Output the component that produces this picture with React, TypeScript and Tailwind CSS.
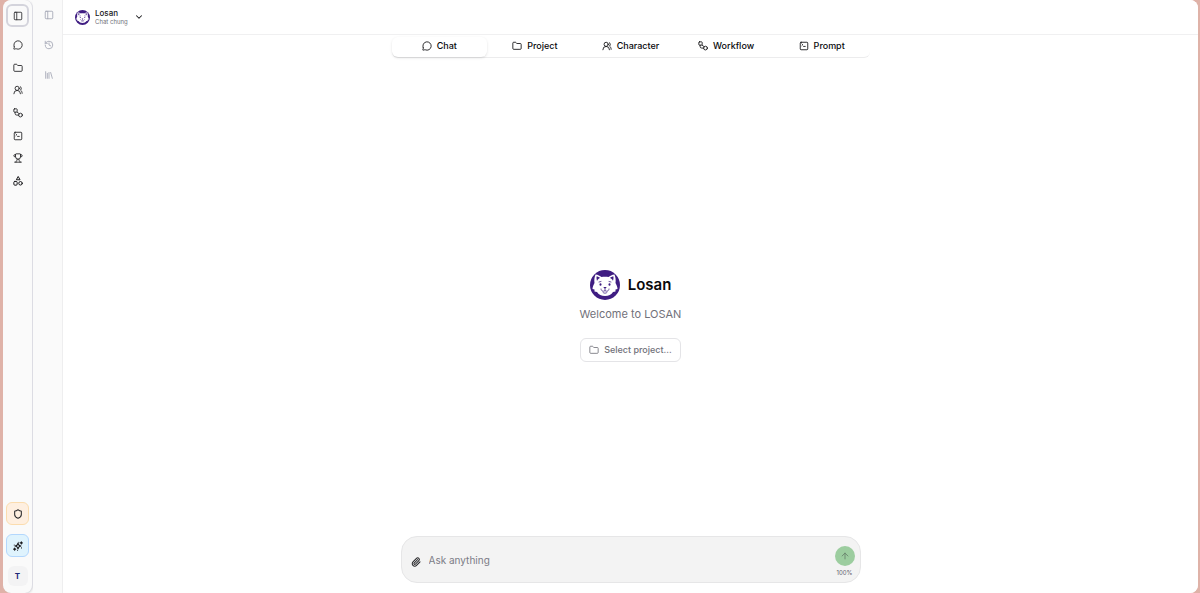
import type { ReactNode } from 'react';
import {
  ArrowUp,
  ChevronDown,
  Folder,
  History,
  Library,
  MessageCircle,
  PanelLeft,
  Paperclip,
  Shield,
  SquareTerminal,
  Trophy,
  UsersRound,
} from 'lucide-react';

type IconProps = { className?: string };

const WorkflowIcon = ({ className }: IconProps) => (
  <svg className={className} viewBox="0 0 24 24" fill="none" stroke="currentColor" strokeWidth="2" strokeLinecap="round" strokeLinejoin="round" aria-hidden="true">
    <rect x="2" y="2" width="8" height="8" rx="1.5" />
    <circle cx="18" cy="17" r="4.5" />
    <path d="M5 10v3a4 4 0 0 0 4 4h4.500" />
    <path d="M10 10l4.500 3.500" />
  </svg>
);

const ShapesIcon = ({ className }: IconProps) => (
  <svg className={className} viewBox="0 0 24 24" fill="none" stroke="currentColor" strokeWidth="2.4" strokeLinecap="round" strokeLinejoin="round" aria-hidden="true">
    <path d="M12 2 8 9h8z" />
    <rect x="2" y="13" width="8" height="9" rx="2.5" />
    <circle cx="18" cy="17.5" r="4.200" />
  </svg>
);

const SparkIcon = ({ className }: IconProps) => (
  <svg className={className} viewBox="0 0 24 24" fill="none" stroke="currentColor" strokeWidth="2.6" strokeLinecap="round" strokeLinejoin="round" aria-hidden="true">
    <path d="M12 5c.8 4.500 2.500 6.200 7 7-4.500.8-6.200 2.500-7 7-.8-4.500-2.500-6.200-7-7 4.500-.8 6.200-2.500 7-7z" />
    <path d="M20 2v5M17.500 4.500h5M4 17v5M1.500 19.500h5" />
    <path d="M14 3h.01M3 9.500h.01M20.500 16.500v.01M11 22h.01" />
  </svg>
);

const CatLogo = ({ className }: IconProps) => (
  <svg className={className} viewBox="0 0 60 60" role="img" aria-label="Losan">
    <circle cx="30" cy="30" r="30" fill="#3f1d82" />
    <path
      d="M11 9c5 0 9 3 12 5 4-1 10-1 14 0 3-2 7-5 12-5 2 5 3 11 2 17 2 4 4 8 4 12l-4 1 0 4-5 1c-3 5-9 8-16 8s-13-3-16-8l-5-1 0-4-4-1c0-4 2-8 4-12-1-6 0-12 2-17z"
      fill="#fff"
    />
    <path d="M13 13c3 0 5 1 7 3-3 1-5 3-6 6-1-3-1-6-1-9zM47 13c-3 0-5 1-7 3 3 1 5 3 6 6 1-3 1-6 1-9z" fill="#3f1d82" />
    <ellipse cx="21" cy="29" rx="2" ry="2.500" fill="#3f1d82" />
    <ellipse cx="39" cy="29" rx="2" ry="2.500" fill="#3f1d82" />
    <path d="M26.500 34h7L30 38z" fill="#3f1d82" />
    <path
      d="M30 38v3M22 38c0 4 5 6 8 3 3 3 8 1 8-3M18 24l4-1M42 24l-4-1M26 45c2 2 6 2 8 0"
      fill="none"
      stroke="#3f1d82"
      strokeWidth="1.500"
      strokeLinecap="round"
    />
  </svg>
);

const navItems: { label: string; icon: ReactNode }[] = [
  { label: 'Chat', icon: <MessageCircle className="size-2.5" /> },
  { label: 'Project', icon: <Folder className="size-2.5" /> },
  { label: 'Character', icon: <UsersRound className="size-2.5" /> },
  { label: 'Workflow', icon: <WorkflowIcon className="size-2.5" /> },
  { label: 'Prompt', icon: <SquareTerminal className="size-2.5" /> },
  { label: 'Ranking', icon: <Trophy className="size-2.5" /> },
  { label: 'Apps', icon: <ShapesIcon className="size-2.5" /> },
];

const Sidebar = () => (
  <aside className="flex w-[30px] shrink-0 flex-col items-center rounded-lg border-r border-[#dcdce3] bg-[#fafafa] pt-1 shadow-sm">
    <button
      aria-label="Toggle sidebar"
      className="flex size-[23px] items-center justify-center rounded-md border-2 border-[#d4d4dc] text-[#27272a]"
    >
      <PanelLeft className="size-2.5" />
    </button>
    <nav className="mt-2 flex h-[156px] flex-col justify-between">
      {navItems.map((item) => (
        <button key={item.label} aria-label={item.label} className="flex size-5 items-center justify-center text-[#18181b]">
          {item.icon}
        </button>
      ))}
    </nav>
    <div className="mt-auto flex flex-col items-center gap-[9px] pb-[7px]">
      <button
        aria-label="Admin"
        className="flex size-[23px] items-center justify-center rounded-md border border-[#fbdcae] bg-[#feefe0] text-[#27272a]"
      >
        <Shield className="size-2.5" strokeWidth={2.5} />
      </button>
      <button
        aria-label="Upgrade"
        className="flex size-[23px] items-center justify-center rounded-md border border-[#b3d7fd] bg-[#dff3fd] text-[#18181b]"
      >
        <SparkIcon className="size-2.5" />
      </button>
      <button className="flex size-5 items-center justify-center rounded-md bg-[#f3f3f4] text-[8px] font-bold text-[#1e2a78]">
        T
      </button>
    </div>
  </aside>
);

const HistoryRail = () => (
  <aside className="flex w-[30px] shrink-0 flex-col items-center gap-2.5 border-r border-[#eeeeef] bg-[#fafafa] pt-[5px] pl-0.5 text-[#a1a5b3]">
    <button aria-label="Open panel" className="flex size-5 items-center justify-center">
      <PanelLeft className="size-2.5" />
    </button>
    <button aria-label="History" className="flex size-5 items-center justify-center">
      <History className="size-2.5" />
    </button>
    <button aria-label="Library" className="flex size-5 items-center justify-center">
      <Library className="size-2.5" />
    </button>
  </aside>
);

const Tabs = () => (
  <div role="tablist" className="mx-auto mt-0.5 grid w-full max-w-[478px] grid-cols-5 rounded-md border-b border-[#ececed]">
    {navItems.slice(0, 5).map((tab, index) => (
      <button
        key={tab.label}
        role="tab"
        aria-selected={index === 0}
        className={`flex h-5 items-center justify-center gap-[5px] rounded-md pb-0.5 text-[9px] leading-3 font-medium text-[#09090b] ${
          index === 0 ? 'shadow-sm' : ''
        }`}
      >
        {tab.icon}
        {tab.label}
      </button>
    ))}
  </div>
);

const Composer = () => (
  <form
    className="mx-auto mb-2.5 flex h-[47px] w-full max-w-[460px] items-center rounded-2xl border border-[#e6e6e7] bg-[#f3f3f3] pr-[5px] pl-[9px]"
    onSubmit={(e) => e.preventDefault()}
  >
    <button type="button" aria-label="Attach file" className="pt-1 text-[#27272a]">
      <Paperclip className="size-2.5" strokeWidth={2.5} />
    </button>
    <input
      aria-label="Message"
      placeholder="Ask anything"
      className="ml-2 min-w-0 flex-1 bg-transparent pt-0.5 text-[10px] outline-none placeholder:text-[#7c7c86]"
    />
    <div className="flex flex-col items-center gap-1 pt-[3px]">
      <button aria-label="Send" className="flex size-5 items-center justify-center rounded-full bg-[#9ccd9f] text-[#66806a]">
        <ArrowUp className="size-2.5" />
      </button>
      <span className="text-[6px] leading-[6px] text-[#62626b]">100%</span>
    </div>
  </form>
);

const App = () => {
  return (
    <div className="h-screen bg-[#dfb2a8] pr-0.5 pl-[3px] font-['Inter','Liberation_Sans',sans-serif]">
      <div className="flex h-full overflow-hidden rounded-lg bg-[#fafafa]">
        <Sidebar />
        <HistoryRail />
        <main className="flex min-w-0 flex-1 flex-col bg-white">
          <header className="flex h-[35px] shrink-0 items-center border-b border-[#f0f0f1] px-3">
            <button className="flex items-center text-left">
              <CatLogo className="size-[15px]" />
              <span className="ml-[5px] flex flex-col">
                <span className="text-[8px] leading-[9px] font-medium text-[#18181b]">Losan</span>
                <span className="text-[6px] leading-[8px] text-[#71717a]">Chat chung</span>
              </span>
              <ChevronDown className="ml-1.5 size-2.5 text-[#18181b]" strokeWidth={2.5} />
            </button>
          </header>
          <Tabs />
          <section className="flex flex-1 flex-col items-center justify-center pt-[38px]">
            <div className="flex items-center gap-2">
              <CatLogo className="size-[30px]" />
              <h1 className="text-[15px] font-semibold text-[#09090b]">Losan</h1>
            </div>
            <p className="mt-1 text-[11px] leading-5 text-[#71717a]">Welcome to LOSAN</p>
            <button className="mt-3.5 flex h-6 items-center gap-[5px] rounded-md border border-[#e4e4e7] px-2 text-[9px] font-medium text-[#71717a]">
              <Folder className="size-2.5" strokeWidth={2} />
              Select project...
            </button>
          </section>
          <Composer />
        </main>
      </div>
    </div>
  );
};

export default App;
